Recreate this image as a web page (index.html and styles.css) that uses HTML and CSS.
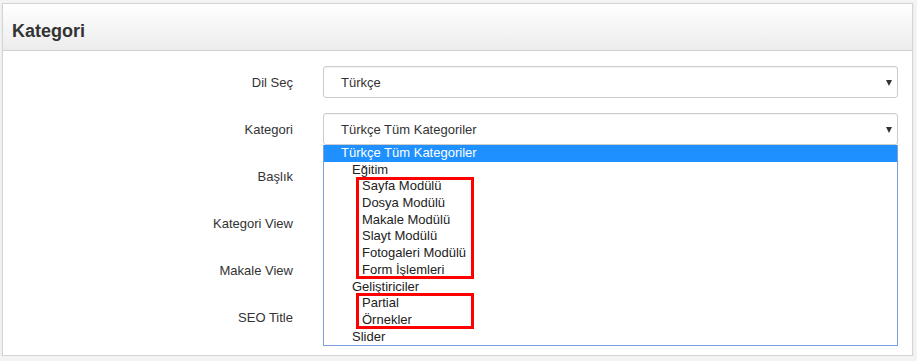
FILE: index.html
```html
<!DOCTYPE html>
<html lang="tr">
<head>
  <meta charset="UTF-8">
  <title>Kategori</title>
  <link rel="stylesheet" href="styles.css">
</head>
<body>
  <div class="panel">
    <div class="panel-heading">Kategori</div>
    <div class="panel-body">
      <div class="form-row">
        <label>Dil Seç</label>
        <div class="select">
          <span>Türkçe</span>
          <i class="caret"></i>
        </div>
      </div>

      <div class="form-row">
        <label>Kategori</label>
        <div class="select-wrap">
          <div class="select">
            <span>Türkçe Tüm Kategoriler</span>
            <i class="caret"></i>
          </div>
          <ul class="dropdown">
            <li class="selected">Türkçe Tüm Kategoriler</li>
            <li class="level-1">Eğitim</li>
            <li class="level-2">Sayfa Modülü</li>
            <li class="level-2">Dosya Modülü</li>
            <li class="level-2">Makale Modülü</li>
            <li class="level-2">Slayt Modülü</li>
            <li class="level-2">Fotogaleri Modülü</li>
            <li class="level-2">Form İşlemleri</li>
            <li class="level-1">Geliştiriciler</li>
            <li class="level-2">Partial</li>
            <li class="level-2">Örnekler</li>
            <li class="level-1">Slider</li>
            <!-- annotation boxes -->
            <span class="mark mark-one"></span>
            <span class="mark mark-two"></span>
          </ul>
        </div>
      </div>

      <div class="form-row">
        <label>Başlık</label>
        <input class="input" type="text">
      </div>

      <div class="form-row">
        <label>Kategori View</label>
        <input class="input" type="text">
      </div>

      <div class="form-row">
        <label>Makale View</label>
        <input class="input" type="text">
      </div>

      <div class="form-row">
        <label>SEO Title</label>
        <input class="input" type="text">
      </div>
    </div>
  </div>
</body>
</html>
```

FILE: styles.css
```css
:root {
  --text-color: #333333;
  --border-color: #d4d4d4;
  --input-border: #cccccc;
  --list-border: #7b9fd8;
  --highlight: #1e90ff;
  --mark-color: #ff0000;
}

html, body {
  margin: 0;
  padding: 0;
  background-color: #f3f3f3;
  font-family: "Liberation Sans", Arial, sans-serif;
  color: var(--text-color);
}

.panel {
  box-sizing: border-box;
  width: 911px;
  height: 353px;
  margin: 3px 0 0 2px;
  background-color: #ffffff;
  border: 1px solid var(--border-color);
  box-shadow: 0 1px 2px rgba(0, 0, 0, 0.08);
}

.panel-heading {
  box-sizing: border-box;
  height: 47px;
  padding: 9px 9px 0;
  display: flex;
  align-items: center;
  font-size: 18px;
  font-weight: 700;
  color: #333;
  background: linear-gradient(to bottom, #ffffff, #ececec);
  border-bottom: 1px solid #cfcfcf;
}

.panel-body {
  padding: 15px 14px 0 0;
  display: flex;
  flex-direction: column;
  gap: 15px;
}

.form-row {
  display: grid;
  grid-template-columns: 290px 1fr;
  column-gap: 30px;
  align-items: center;
  height: 32px;
}

.form-row label {
  text-align: right;
  font-size: 13px;
  color: #333;
}

.select,
.input {
  box-sizing: border-box;
  width: 100%;
  height: 32px;
  border: 1px solid var(--input-border);
  border-radius: 3px;
  background-color: #fff;
  font-family: inherit;
  font-size: 13px;
}

.select {
  display: flex;
  align-items: center;
  justify-content: space-between;
  padding: 0 5px 0 17px;
  color: #333;
  box-shadow: inset 0 1px 1px rgba(0, 0, 0, 0.05);
}

.caret {
  width: 0;
  height: 0;
  border-left: 3px solid transparent;
  border-right: 3px solid transparent;
  border-top: 6px solid #333;
  margin-top: 1px;
}

.select-wrap {
  position: relative;
  z-index: 2;
}

.dropdown {
  position: absolute;
  top: 100%;
  left: 0;
  right: 0;
  margin: 0;
  padding: 0;
  list-style: none;
  background-color: #fff;
  border: 1px solid var(--list-border);
  border-top: none;
  font-size: 13px;
  color: #222;
}

.dropdown li {
  height: 16.7px;
  line-height: 16.7px;
  padding-left: 17px;
  white-space: nowrap;
}

.dropdown li.selected {
  background-color: var(--highlight);
  color: #fff;
}

.dropdown li.level-1 {
  padding-left: 28px;
}

.dropdown li.level-2 {
  padding-left: 38px;
}

.mark {
  position: absolute;
  left: 32px;
  width: 118px;
  box-sizing: border-box;
  border: 3px solid var(--mark-color);
}

.mark-one {
  top: 32px;
  height: 102px;
}

.mark-two {
  top: 148px;
  height: 36px;
}
```
